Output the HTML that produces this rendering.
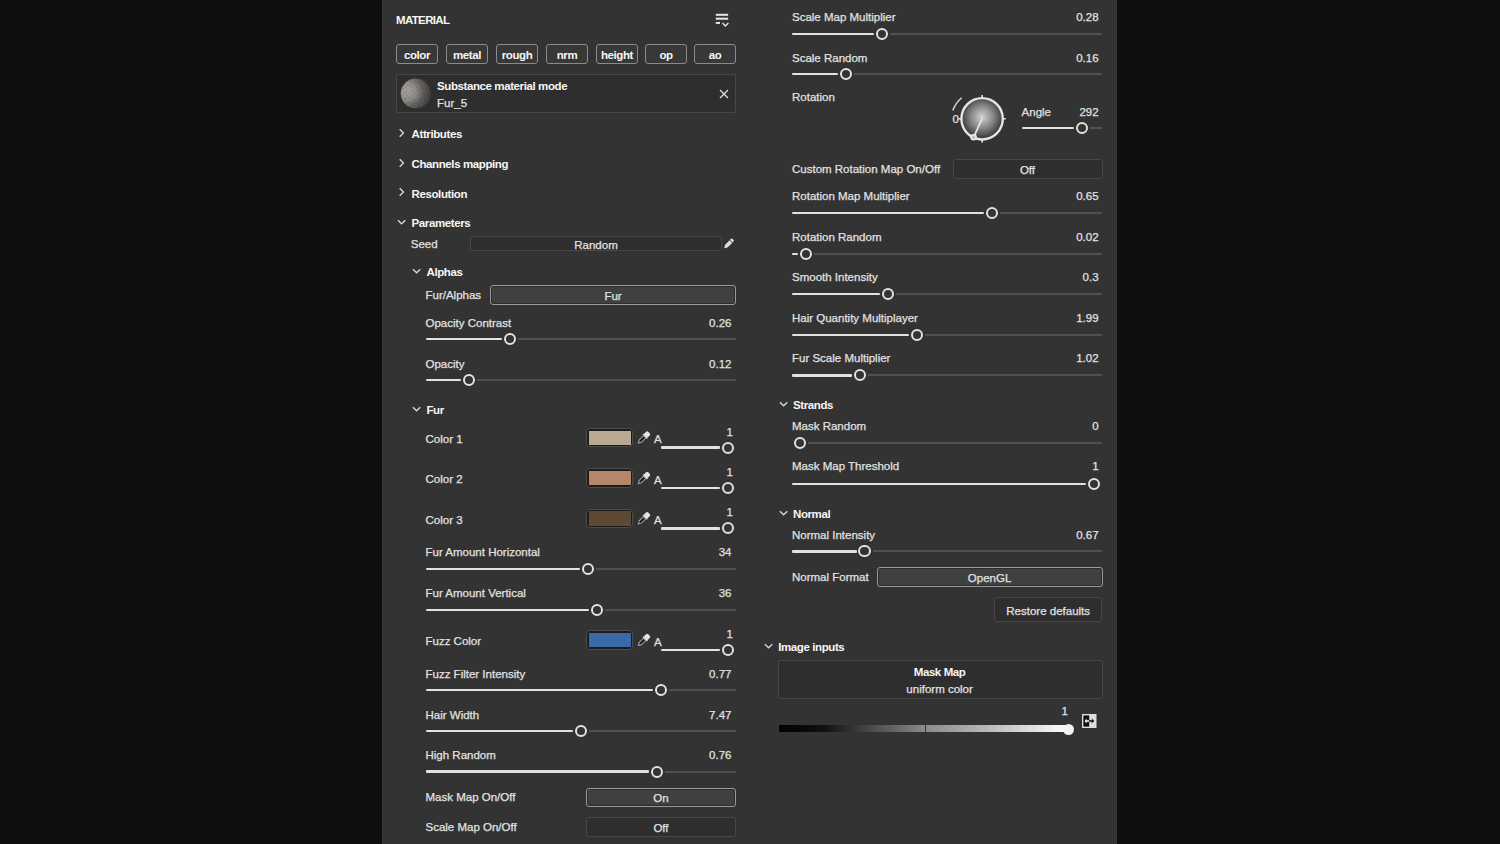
<!DOCTYPE html><html><head><meta charset="utf-8"><style>
html,body{margin:0;padding:0}
body{width:1500px;height:844px;background:#0f0f0f;position:relative;overflow:hidden;font-family:"Liberation Sans",sans-serif}
#panel{position:absolute;left:382px;top:0;width:735px;height:844px;background:#333;box-shadow:inset 1px 0 0 #393939,inset -1px 0 0 #393939}
.t{position:absolute;white-space:nowrap;font-size:11.5px;line-height:11.5px}
.lab{color:#e2e2e2;letter-spacing:0;-webkit-text-stroke:0.25px #e2e2e2}
.hd{color:#f6f6f6;font-weight:bold;letter-spacing:-0.4px}
.val{color:#e2e2e2;letter-spacing:0;-webkit-text-stroke:0.25px #e2e2e2}
.tr{position:absolute;height:2px;background:#505050}
.tf{position:absolute;height:2.4px;background:#e2e2e2;border-radius:1px}
.kn{position:absolute;width:8.2px;height:8.2px;border:2px solid #e2e2e2;border-radius:50%;background:#333}
.ic{position:absolute;overflow:visible}
.box{position:absolute;box-sizing:border-box;border-radius:3px}
.dk{background:#2e2e2e;border:1px solid #474747}
.br{background:#404040;border:1.8px solid #999;box-shadow:inset 0 0 0 1px #2c2c2c}
.sw{position:absolute;box-sizing:border-box;border:1.3px solid #4b4d4d;border-radius:4px;background:#1c1c1c;padding:1.7px}
.sw div{width:100%;height:100%}
</style></head><body><div id="panel"></div>

<div class="t hd" style="left:396px;top:14.6px;letter-spacing:-0.65px">MATERIAL</div>
<svg class="ic" style="left:714px;top:12px" width="16" height="16" viewBox="0 0 16 16"><rect x="1.8" y="1.8" width="12.3" height="2" fill="#e8e8e8"/><rect x="1.8" y="5.7" width="12.3" height="2" fill="#e8e8e8"/><rect x="1.8" y="10" width="4.2" height="1.9" fill="#e8e8e8"/><path d="M8.5 11 L11.4 14 L14.4 11" fill="none" stroke="#e8e8e8" stroke-width="1.4"/></svg>
<div class="box" style="left:396px;top:44px;width:42px;height:20px;border:1.7px solid #8a8a8a;background:#383838;border-radius:3px"></div>
<div class="t hd" style="left:317.0px;width:200px;text-align:center;top:50.3px">color</div>
<div class="box" style="left:446px;top:44px;width:42px;height:20px;border:1.7px solid #8a8a8a;background:#383838;border-radius:3px"></div>
<div class="t hd" style="left:367.0px;width:200px;text-align:center;top:50.3px">metal</div>
<div class="box" style="left:496px;top:44px;width:42px;height:20px;border:1.7px solid #8a8a8a;background:#383838;border-radius:3px"></div>
<div class="t hd" style="left:417.0px;width:200px;text-align:center;top:50.3px">rough</div>
<div class="box" style="left:546px;top:44px;width:42px;height:20px;border:1.7px solid #8a8a8a;background:#383838;border-radius:3px"></div>
<div class="t hd" style="left:467.0px;width:200px;text-align:center;top:50.3px">nrm</div>
<div class="box" style="left:596px;top:44px;width:42px;height:20px;border:1.7px solid #8a8a8a;background:#383838;border-radius:3px"></div>
<div class="t hd" style="left:517.0px;width:200px;text-align:center;top:50.3px">height</div>
<div class="box" style="left:645px;top:44px;width:42px;height:20px;border:1.7px solid #8a8a8a;background:#383838;border-radius:3px"></div>
<div class="t hd" style="left:566.0px;width:200px;text-align:center;top:50.3px">op</div>
<div class="box" style="left:694px;top:44px;width:42px;height:20px;border:1.7px solid #8a8a8a;background:#383838;border-radius:3px"></div>
<div class="t hd" style="left:615.0px;width:200px;text-align:center;top:50.3px">ao</div>
<div class="box" style="left:396px;top:74px;width:340px;height:39px;background:#2e2e2e;border:1px solid #474747;border-radius:2px"></div>
<svg class="ic" style="left:400px;top:78px" width="32" height="32" viewBox="0 0 32 32"><defs><radialGradient id="sg" cx="0.22" cy="0.42" r="0.95"><stop offset="0" stop-color="#b2aeaa"/><stop offset="0.3" stop-color="#9a9692"/><stop offset="0.55" stop-color="#686563"/><stop offset="0.8" stop-color="#4a4847"/><stop offset="1" stop-color="#3c3b3a"/></radialGradient><filter id="nz" x="0" y="0" width="1" height="1"><feTurbulence type="fractalNoise" baseFrequency="0.9" numOctaves="2" seed="3"/><feColorMatrix type="matrix" values="0 0 0 0 0  0 0 0 0 0  0 0 0 0 0  0 0 0 -1.6 1.1"/></filter><clipPath id="sc"><circle cx="15.7" cy="15.5" r="15"/></clipPath></defs><circle cx="15.7" cy="15.5" r="15" fill="url(#sg)"/><g clip-path="url(#sc)"><rect width="32" height="32" filter="url(#nz)" opacity="0.28"/></g></svg>
<div class="t hd" style="left:437.0px;top:80.8px">Substance material mode</div>
<div class="t lab" style="left:437.0px;top:97.8px">Fur_5</div>
<svg class="ic" style="left:719px;top:89px" width="10" height="10" viewBox="0 0 10 10"><path d="M1 1 L9 9 M9 1 L1 9" stroke="#e0e0e0" stroke-width="1.3"/></svg>
<svg class="ic" style="left:398px;top:128.0px" width="8" height="10" viewBox="0 0 8 10"><path d="M1.7 1.3 L5.4 5 L1.7 8.7" fill="none" stroke="#d6d6d6" stroke-width="1.4"/></svg>
<div class="t hd" style="left:411.6px;top:129.3px">Attributes</div>
<svg class="ic" style="left:398px;top:158.0px" width="8" height="10" viewBox="0 0 8 10"><path d="M1.7 1.3 L5.4 5 L1.7 8.7" fill="none" stroke="#d6d6d6" stroke-width="1.4"/></svg>
<div class="t hd" style="left:411.6px;top:159.3px">Channels mapping</div>
<svg class="ic" style="left:398px;top:187.2px" width="8" height="10" viewBox="0 0 8 10"><path d="M1.7 1.3 L5.4 5 L1.7 8.7" fill="none" stroke="#d6d6d6" stroke-width="1.4"/></svg>
<div class="t hd" style="left:411.6px;top:188.5px">Resolution</div>
<svg class="ic" style="left:397px;top:218.0px" width="10" height="8" viewBox="0 0 10 8"><path d="M0.9 2.2 L4.6 5.8 L8.3 2.2" fill="none" stroke="#d6d6d6" stroke-width="1.4"/></svg>
<div class="t hd" style="left:411.6px;top:218.3px">Parameters</div>
<div class="t lab" style="left:410.8px;top:238.9px">Seed</div>
<div class="box dk" style="left:470px;top:235.6px;width:252px;height:15.5px"></div>
<div class="t lab" style="left:496.0px;width:200px;text-align:center;top:239.8px">Random</div>
<svg class="ic" style="left:0;top:0" width="1" height="1" viewBox="0 0 1 1"><g transform="translate(728.7 243.8) rotate(45) scale(0.88)"><path d="M-2.1 -4.3 V-5.6 Q-2.1 -6.9 -0.8 -6.9 H0.8 Q2.1 -6.9 2.1 -5.6 V-4.3 Z" fill="#e6e6e6"/><path d="M-2.1 -3.5 H2.1 V3.6 L0.5 6.6 Q0 7.1 -0.5 6.6 L-2.1 3.6 Z" fill="#dedede"/></g></svg>
<svg class="ic" style="left:412px;top:267.0px" width="10" height="8" viewBox="0 0 10 8"><path d="M0.9 2.2 L4.6 5.8 L8.3 2.2" fill="none" stroke="#d6d6d6" stroke-width="1.4"/></svg>
<div class="t hd" style="left:426.5px;top:267.3px">Alphas</div>
<div class="t lab" style="left:425.5px;top:289.9px">Fur/Alphas</div>
<div class="box br" style="left:490px;top:285px;width:245.8px;height:20px"></div>
<div class="t lab" style="left:513.0px;width:200px;text-align:center;top:290.8px">Fur</div>
<div class="t lab" style="left:425.5px;top:318.1px">Opacity Contrast</div>
<div class="t val" style="right:768.5px;top:318.1px">0.26</div>
<div class="tr" style="left:518.2px;top:338.3px;width:217.8px"></div>
<div class="tf" style="left:425.5px;top:338.1px;width:76.7px"></div>
<div class="kn" style="left:504.1px;top:333.2px"></div>
<div class="t lab" style="left:425.5px;top:358.8px">Opacity</div>
<div class="t val" style="right:768.5px;top:358.8px">0.12</div>
<div class="tr" style="left:476.6px;top:378.9px;width:259.4px"></div>
<div class="tf" style="left:425.5px;top:378.7px;width:35.1px"></div>
<div class="kn" style="left:462.5px;top:373.8px"></div>
<div class="t lab" style="left:425.5px;top:547.3px">Fur Amount Horizontal</div>
<div class="t val" style="right:768.5px;top:547.3px">34</div>
<div class="tr" style="left:595.8px;top:568.3px;width:140.2px"></div>
<div class="tf" style="left:425.5px;top:568.1px;width:154.3px"></div>
<div class="kn" style="left:581.7px;top:563.2px"></div>
<div class="t lab" style="left:425.5px;top:588.0px">Fur Amount Vertical</div>
<div class="t val" style="right:768.5px;top:588.0px">36</div>
<div class="tr" style="left:604.7px;top:608.8px;width:131.3px"></div>
<div class="tf" style="left:425.5px;top:608.6px;width:163.2px"></div>
<div class="kn" style="left:590.6px;top:603.7px"></div>
<div class="t lab" style="left:425.5px;top:669.2px">Fuzz Filter Intensity</div>
<div class="t val" style="right:768.5px;top:669.2px">0.77</div>
<div class="tr" style="left:668.8px;top:689.3px;width:67.2px"></div>
<div class="tf" style="left:425.5px;top:689.1px;width:227.3px"></div>
<div class="kn" style="left:654.7px;top:684.2px"></div>
<div class="t lab" style="left:425.5px;top:709.5px">Hair Width</div>
<div class="t val" style="right:768.5px;top:709.5px">7.47</div>
<div class="tr" style="left:588.8px;top:730.3px;width:147.2px"></div>
<div class="tf" style="left:425.5px;top:730.1px;width:147.3px"></div>
<div class="kn" style="left:574.7px;top:725.2px"></div>
<div class="t lab" style="left:425.5px;top:750.3px">High Random</div>
<div class="t val" style="right:768.5px;top:750.3px">0.76</div>
<div class="tr" style="left:664.6px;top:770.6px;width:71.4px"></div>
<div class="tf" style="left:425.5px;top:770.4px;width:223.1px"></div>
<div class="kn" style="left:650.5px;top:765.5px"></div>
<svg class="ic" style="left:412px;top:405.0px" width="10" height="8" viewBox="0 0 10 8"><path d="M0.9 2.2 L4.6 5.8 L8.3 2.2" fill="none" stroke="#d6d6d6" stroke-width="1.4"/></svg>
<div class="t hd" style="left:426.5px;top:405.3px">Fur</div>
<div class="t lab" style="left:425.5px;top:433.8px">Color 1</div>
<div class="sw" style="left:586px;top:427.9px;width:47.3px;height:19.6px"><div style="background:#b9a892"></div></div>
<svg class="ic" style="left:0;top:0" width="1" height="1" viewBox="0 0 1 1"><g transform="translate(643.65 437.80) rotate(45)"><rect x="-2.6" y="-7.6" width="5.2" height="5.4" rx="1.6" fill="#e4e4e4"/><rect x="-3.1" y="-2.8" width="6.2" height="1.3" fill="#e4e4e4"/><path d="M-1.6 -1.3 V4.8 L0 7.4 L1.6 4.8 V-1.3 Z" fill="#1c1c1c" stroke="#a8a8a8" stroke-width="1"/></g></svg>
<div class="t lab" style="left:654.0px;top:434.3px">A</div>
<div class="tf" style="left:661px;top:446.4px;width:59.0px"></div>
<div class="kn" style="left:721.9px;top:441.5px"></div>
<div class="t val" style="right:767.0px;top:426.6px">1</div>
<div class="t lab" style="left:425.5px;top:474.3px">Color 2</div>
<div class="sw" style="left:586px;top:468.4px;width:47.3px;height:19.6px"><div style="background:#b5876a"></div></div>
<svg class="ic" style="left:0;top:0" width="1" height="1" viewBox="0 0 1 1"><g transform="translate(643.65 478.30) rotate(45)"><rect x="-2.6" y="-7.6" width="5.2" height="5.4" rx="1.6" fill="#e4e4e4"/><rect x="-3.1" y="-2.8" width="6.2" height="1.3" fill="#e4e4e4"/><path d="M-1.6 -1.3 V4.8 L0 7.4 L1.6 4.8 V-1.3 Z" fill="#1c1c1c" stroke="#a8a8a8" stroke-width="1"/></g></svg>
<div class="t lab" style="left:654.0px;top:474.8px">A</div>
<div class="tf" style="left:661px;top:486.9px;width:59.0px"></div>
<div class="kn" style="left:721.9px;top:482.0px"></div>
<div class="t val" style="right:767.0px;top:467.1px">1</div>
<div class="t lab" style="left:425.5px;top:514.6px">Color 3</div>
<div class="sw" style="left:586px;top:508.7px;width:47.3px;height:19.6px"><div style="background:#5e4a34"></div></div>
<svg class="ic" style="left:0;top:0" width="1" height="1" viewBox="0 0 1 1"><g transform="translate(643.65 518.60) rotate(45)"><rect x="-2.6" y="-7.6" width="5.2" height="5.4" rx="1.6" fill="#e4e4e4"/><rect x="-3.1" y="-2.8" width="6.2" height="1.3" fill="#e4e4e4"/><path d="M-1.6 -1.3 V4.8 L0 7.4 L1.6 4.8 V-1.3 Z" fill="#1c1c1c" stroke="#a8a8a8" stroke-width="1"/></g></svg>
<div class="t lab" style="left:654.0px;top:515.1px">A</div>
<div class="tf" style="left:661px;top:527.2px;width:59.0px"></div>
<div class="kn" style="left:721.9px;top:522.3px"></div>
<div class="t val" style="right:767.0px;top:507.4px">1</div>
<div class="t lab" style="left:425.5px;top:636.3px">Fuzz Color</div>
<div class="sw" style="left:586px;top:630.4px;width:47.3px;height:19.6px"><div style="background:#3a6aaa"></div></div>
<svg class="ic" style="left:0;top:0" width="1" height="1" viewBox="0 0 1 1"><g transform="translate(643.65 640.30) rotate(45)"><rect x="-2.6" y="-7.6" width="5.2" height="5.4" rx="1.6" fill="#e4e4e4"/><rect x="-3.1" y="-2.8" width="6.2" height="1.3" fill="#e4e4e4"/><path d="M-1.6 -1.3 V4.8 L0 7.4 L1.6 4.8 V-1.3 Z" fill="#1c1c1c" stroke="#a8a8a8" stroke-width="1"/></g></svg>
<div class="t lab" style="left:654.0px;top:636.8px">A</div>
<div class="tf" style="left:661px;top:648.9px;width:59.0px"></div>
<div class="kn" style="left:721.9px;top:644.0px"></div>
<div class="t val" style="right:767.0px;top:629.1px">1</div>
<div class="t lab" style="left:425.5px;top:792.3px">Mask Map On/Off</div>
<div class="box br" style="left:586px;top:788px;width:150px;height:19.2px"></div>
<div class="t lab" style="left:561.0px;width:200px;text-align:center;top:792.8px">On</div>
<div class="t lab" style="left:425.5px;top:821.5px">Scale Map On/Off</div>
<div class="box dk" style="left:586px;top:817px;width:150px;height:19.5px"></div>
<div class="t lab" style="left:561.0px;width:200px;text-align:center;top:823.3px">Off</div>
<div class="t lab" style="left:792.0px;top:12.1px">Scale Map Multiplier</div>
<div class="t val" style="right:401.4px;top:12.1px">0.28</div>
<div class="tr" style="left:890.3px;top:32.8px;width:212.0px"></div>
<div class="tf" style="left:792px;top:32.6px;width:82.3px"></div>
<div class="kn" style="left:876.2px;top:27.7px"></div>
<div class="t lab" style="left:792.0px;top:52.5px">Scale Random</div>
<div class="t val" style="right:401.4px;top:52.5px">0.16</div>
<div class="tr" style="left:854.0px;top:73.2px;width:248.3px"></div>
<div class="tf" style="left:792px;top:73.0px;width:46.0px"></div>
<div class="kn" style="left:839.9px;top:68.1px"></div>
<div class="t lab" style="left:792.0px;top:191.4px">Rotation Map Multiplier</div>
<div class="t val" style="right:401.4px;top:191.4px">0.65</div>
<div class="tr" style="left:1000.0px;top:212.1px;width:102.3px"></div>
<div class="tf" style="left:792px;top:211.9px;width:192.0px"></div>
<div class="kn" style="left:985.9px;top:207.0px"></div>
<div class="t lab" style="left:792.0px;top:231.8px">Rotation Random</div>
<div class="t val" style="right:401.4px;top:231.8px">0.02</div>
<div class="tr" style="left:813.6px;top:252.9px;width:288.7px"></div>
<div class="tf" style="left:792px;top:252.7px;width:5.6px"></div>
<div class="kn" style="left:799.5px;top:247.8px"></div>
<div class="t lab" style="left:792.0px;top:272.2px">Smooth Intensity</div>
<div class="t val" style="right:401.4px;top:272.2px">0.3</div>
<div class="tr" style="left:896.1px;top:293.3px;width:206.2px"></div>
<div class="tf" style="left:792px;top:293.1px;width:88.1px"></div>
<div class="kn" style="left:882.0px;top:288.2px"></div>
<div class="t lab" style="left:792.0px;top:312.9px">Hair Quantity Multiplayer</div>
<div class="t val" style="right:401.4px;top:312.9px">1.99</div>
<div class="tr" style="left:925.1px;top:334.0px;width:177.2px"></div>
<div class="tf" style="left:792px;top:333.8px;width:117.1px"></div>
<div class="kn" style="left:911.0px;top:328.9px"></div>
<div class="t lab" style="left:792.0px;top:353.3px">Fur Scale Multiplier</div>
<div class="t val" style="right:401.4px;top:353.3px">1.02</div>
<div class="tr" style="left:867.7px;top:374.4px;width:234.6px"></div>
<div class="tf" style="left:792px;top:374.2px;width:59.7px"></div>
<div class="kn" style="left:853.6px;top:369.3px"></div>
<div class="t lab" style="left:792.0px;top:420.6px">Mask Random</div>
<div class="t val" style="right:401.4px;top:420.6px">0</div>
<div class="tr" style="left:807.8px;top:442.1px;width:294.5px"></div>
<div class="kn" style="left:793.7px;top:437.0px"></div>
<div class="t lab" style="left:792.0px;top:461.2px">Mask Map Threshold</div>
<div class="t val" style="right:401.4px;top:461.2px">1</div>
<div class="tf" style="left:792px;top:482.6px;width:294.3px"></div>
<div class="kn" style="left:1088.2px;top:477.7px"></div>
<div class="t lab" style="left:792.0px;top:529.8px">Normal Intensity</div>
<div class="t val" style="right:401.4px;top:529.8px">0.67</div>
<div class="tr" style="left:872.5px;top:550.4px;width:229.8px"></div>
<div class="tf" style="left:792px;top:550.2px;width:64.5px"></div>
<div class="kn" style="left:858.4px;top:545.3px"></div>
<div class="t lab" style="left:792.0px;top:92.3px">Rotation</div>
<svg class="ic" style="left:945px;top:90px" width="70" height="60" viewBox="945 90 70 60"><defs><radialGradient id="dg" cx="982" cy="117" r="21" gradientUnits="userSpaceOnUse"><stop offset="0" stop-color="#d2d2d2"/><stop offset="0.55" stop-color="#858585"/><stop offset="1" stop-color="#3a3a3a"/></radialGradient></defs><circle cx="982.1" cy="118.8" r="20.7" fill="url(#dg)" stroke="#e6e6e6" stroke-width="2.4"/><path d="M982.1 95 V98 M982.1 139.6 V142.5 M958.4 118.8 H961.4 M1002.8 118.8 H1005.8" stroke="#e6e6e6" stroke-width="1.6"/><line x1="982.1" y1="118.5" x2="973.6" y2="137.3" stroke="#e6e6e6" stroke-width="1.8"/><circle cx="973.6" cy="137.3" r="2.6" fill="#c4c4c4" stroke="#f0f0f0" stroke-width="1.3"/><path d="M952.8 110.6 A30 30 0 0 1 961.7 97.8" fill="none" stroke="#d8d8d8" stroke-width="1.4"/></svg>
<div class="t lab" style="left:952.5px;top:114.4px">0</div>
<div class="t lab" style="left:1021.6px;top:106.5px">Angle</div>
<div class="t val" style="right:401.4px;top:106.5px">292</div>
<div class="tr" style="left:1089.6px;top:127.1px;width:12.4px"></div>
<div class="tf" style="left:1021.6px;top:126.9px;width:52.0px"></div>
<div class="kn" style="left:1075.5px;top:122.0px"></div>
<div class="t lab" style="left:792.0px;top:163.5px">Custom Rotation Map On/Off</div>
<div class="box dk" style="left:952.5px;top:159.3px;width:150.3px;height:19.3px;border-width:1.5px"></div>
<div class="t lab" style="left:927.5px;width:200px;text-align:center;top:164.8px">Off</div>
<svg class="ic" style="left:778.5px;top:400.0px" width="10" height="8" viewBox="0 0 10 8"><path d="M0.9 2.2 L4.6 5.8 L8.3 2.2" fill="none" stroke="#d6d6d6" stroke-width="1.4"/></svg>
<div class="t hd" style="left:793.0px;top:400.3px">Strands</div>
<svg class="ic" style="left:778.5px;top:509.0px" width="10" height="8" viewBox="0 0 10 8"><path d="M0.9 2.2 L4.6 5.8 L8.3 2.2" fill="none" stroke="#d6d6d6" stroke-width="1.4"/></svg>
<div class="t hd" style="left:793.0px;top:509.3px">Normal</div>
<div class="t lab" style="left:792.0px;top:571.5px">Normal Format</div>
<div class="box br" style="left:876.8px;top:567px;width:225.8px;height:20px"></div>
<div class="t lab" style="left:889.6px;width:200px;text-align:center;top:573.1px">OpenGL</div>
<div class="box dk" style="left:994.2px;top:597.2px;width:108.1px;height:25.3px;border-width:1.6px"></div>
<div class="t lab" style="left:948.2px;width:200px;text-align:center;top:605.6px">Restore defaults</div>
<svg class="ic" style="left:764px;top:642.0px" width="10" height="8" viewBox="0 0 10 8"><path d="M0.9 2.2 L4.6 5.8 L8.3 2.2" fill="none" stroke="#d6d6d6" stroke-width="1.4"/></svg>
<div class="t hd" style="left:778.2px;top:642.3px">Image inputs</div>
<div class="box dk" style="left:777.5px;top:660.3px;width:325px;height:38.8px"></div>
<div class="t hd" style="left:839.6px;width:200px;text-align:center;top:667.2px">Mask Map</div>
<div class="t lab" style="left:839.6px;width:200px;text-align:center;top:683.7px">uniform color</div>
<div style="position:absolute;left:778.7px;top:724.7px;width:291px;height:7.5px;background:linear-gradient(90deg,#000 0%,#101010 15%,#555 35%,#8a8a8a 50%,#b5b5b5 70%,#fff 100%)"></div>
<div style="position:absolute;left:925px;top:724.7px;width:1px;height:7.5px;background:#3a3a3a"></div>
<div style="position:absolute;left:1063px;top:723.5px;width:11px;height:11px;border-radius:50%;background:#f2f2f2"></div>
<div class="t val" style="right:432.0px;top:705.8px">1</div>
<svg class="ic" style="left:1081.5px;top:714px" width="15" height="14" viewBox="0 0 15 14"><rect x="0" y="0" width="14.5" height="14" fill="#dedede"/><rect x="1.4" y="1.4" width="5.8" height="11.2" fill="#0e0e0e"/><path d="M2.6 7 L4.6 4.4 V9.6 Z" fill="#f0f0f0"/><rect x="4" y="6.2" width="3.2" height="1.6" fill="#f0f0f0"/><path d="M12.2 7 L9.8 4.6 V9.4 Z" fill="#0e0e0e"/><rect x="7.2" y="6.2" width="3" height="1.6" fill="#0e0e0e"/></svg>
</body></html>
